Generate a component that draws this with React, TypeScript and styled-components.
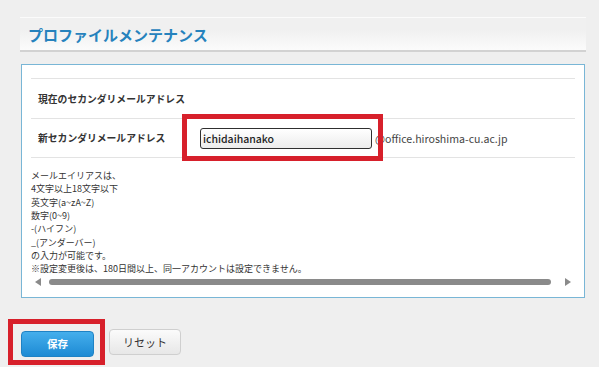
import React from "react";
import styled, { createGlobalStyle } from "styled-components";

const Global = createGlobalStyle`
  html, body { margin: 0; padding: 0; background: #efefef; }
  body { font-family: "Noto Sans CJK JP", "Noto Sans", sans-serif; color: #333; }
`;

const Page = styled.div`
  width: 599px;
  height: 367px;
  overflow: hidden;
  padding-top: 17px;
  box-sizing: border-box;
`;

const Header = styled.div`
  margin-left: 20px;
  width: 566px;
  height: 35px;
  box-sizing: border-box;
  border-top: 1px solid #fbfbfb;
  border-bottom: 2px solid #d2d2d2;
  background: linear-gradient(#f0f0f0 35%, #fbfbfb);
  display: flex;
  align-items: center;
  padding-left: 8px;
`;

const Title = styled.h1`
  margin: 0;
  font-size: 15px;
  font-weight: 700;
  color: #2682bd;
`;

const Box = styled.div`
  margin: 12px 0 0 21px;
  width: 564px;
  height: 234px;
  box-sizing: border-box;
  border: 1px solid #79b6d6;
  background: #fff;
  padding: 13px 9px 0 9px;
`;

const Row = styled.div<{ $last?: boolean }>`
  display: flex;
  align-items: center;
  height: 40px;
  box-sizing: border-box;
  border-top: 1px solid #e3e3e3;
  border-bottom: ${(p) => (p.$last ? "1px solid #e3e3e3" : "none")};
`;

const Label = styled.div`
  width: 169px;
  flex: none;
  padding-left: 7px;
  box-sizing: border-box;
  font-size: 9.8px;
  font-weight: 700;
  color: #333;
  white-space: nowrap;
`;

const Field = styled.div`
  display: flex;
  align-items: center;
`;

const InputWrap = styled.div`
  position: relative;
`;

const RedFrame = styled.div`
  position: absolute;
  left: -18px;
  top: -14px;
  right: -11px;
  bottom: -12px;
  border: 5px solid #d7202b;
  pointer-events: none;
  z-index: 2;
`;

const Input = styled.div`
  width: 172px;
  height: 21px;
  box-sizing: border-box;
  border: 1px solid #2f2f2f;
  border-radius: 3px;
  background: linear-gradient(#ffffff, #ececec);
  font-size: 10.5px;
  font-weight: 500;
  color: #222;
  display: flex;
  align-items: center;
  padding-left: 2px;
`;

const Domain = styled.span`
  margin-left: 3px;
  font-size: 10.6px;
  color: #444;
  white-space: nowrap;
`;

const Note = styled.div`
  padding-top: 11px;
  font-size: 9px;
  line-height: 13.35px;
  color: #333;
`;

const Scroll = styled.div`
  height: 12px;
  display: flex;
  align-items: center;
  padding: 0 4px;
`;

const Thumb = styled.div`
  margin: 0 14px 0 8px;
  flex: 1;
  height: 6px;
  border-radius: 3px;
  background: #8a8a8a;
`;

const Buttons = styled.div`
  margin: 31px 0 0 21px;
  display: flex;
  gap: 15px;
`;

const SaveWrap = styled.div`
  position: relative;
`;

const SaveFrame = styled.div`
  position: absolute;
  left: -13px;
  top: -10px;
  right: -11px;
  bottom: -8px;
  border: 5px solid #d7202b;
  pointer-events: none;
`;

const Button = styled.button<{ $primary?: boolean }>`
  width: ${(p) => (p.$primary ? "73px" : "72px")};
  height: 26px;
  border-radius: 4px;
  font-family: "Noto Sans CJK JP", sans-serif;
  font-size: ${(p) => (p.$primary ? "10.5px" : "11px")};
  font-weight: ${(p) => (p.$primary ? 700 : 400)};
  color: ${(p) => (p.$primary ? "#fff" : "#333")};
  border: 1px solid ${(p) => (p.$primary ? "#1f82c4" : "#cfcfcf")};
  background: ${(p) =>
    p.$primary
      ? "linear-gradient(#45aeec, #1d8ad4)"
      : "linear-gradient(#fbfbfb, #e7e7e7)"};
  padding: 0;
  cursor: pointer;
`;

const Arrow = ({ dir }: { dir: "left" | "right" }) => (
  <svg width="6" height="8" viewBox="0 0 6 8">
    {dir === "left" ? (
      <polygon points="6,0 6,8 0,4" fill="#8a8a8a" />
    ) : (
      <polygon points="0,0 0,8 6,4" fill="#8a8a8a" />
    )}
  </svg>
);

const notes = [
  "メールエイリアスは、",
  "4文字以上18文字以下",
  "英文字(a~zA~Z)",
  "数字(0~9)",
  "-(ハイフン)",
  "_(アンダーバー)",
  "の入力が可能です。",
  "※設定変更後は、180日間以上、同一アカウントは設定できません。",
];

export default function App() {
  return (
    <Page>
      <Global />
      <Header>
        <Title>プロファイルメンテナンス</Title>
      </Header>
      <Box>
        <Row>
          <Label>現在のセカンダリメールアドレス</Label>
        </Row>
        <Row $last>
          <Label>新セカンダリメールアドレス</Label>
          <Field>
            <InputWrap>
              <Input>ichidaihanako</Input>
              <RedFrame />
            </InputWrap>
            <Domain>@office.hiroshima-cu.ac.jp</Domain>
          </Field>
        </Row>
        <Note>
          {notes.map((n) => (
            <div key={n}>{n}</div>
          ))}
        </Note>
        <Scroll>
          <Arrow dir="left" />
          <Thumb />
          <Arrow dir="right" />
        </Scroll>
      </Box>
      <Buttons>
        <SaveWrap>
          <Button $primary>保存</Button>
          <SaveFrame />
        </SaveWrap>
        <Button>リセット</Button>
      </Buttons>
    </Page>
  );
}
